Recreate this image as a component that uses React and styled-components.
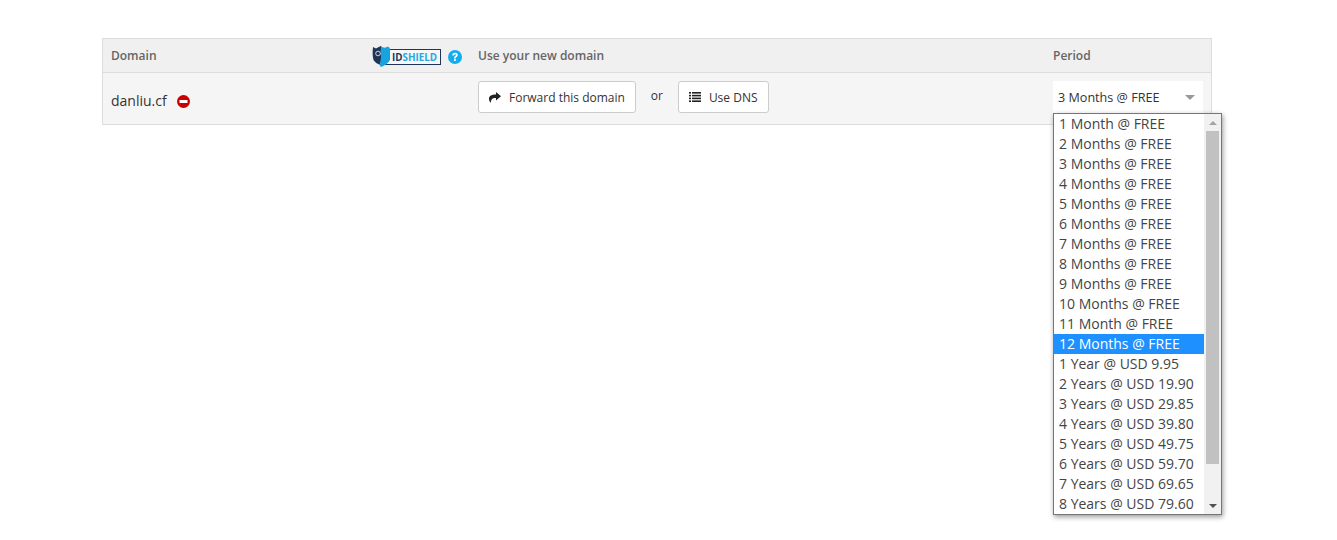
import React from 'react';
import styled, { createGlobalStyle } from 'styled-components';

const GlobalStyle = createGlobalStyle`
  html, body {
    margin: 0;
    padding: 0;
    background: #fff;
    font-family: "Open Sans", sans-serif;
  }
`;

const periods = [
  '1 Month @ FREE', '2 Months @ FREE', '3 Months @ FREE', '4 Months @ FREE', '5 Months @ FREE',
  '6 Months @ FREE', '7 Months @ FREE', '8 Months @ FREE', '9 Months @ FREE', '10 Months @ FREE',
  '11 Month @ FREE', '12 Months @ FREE', '1 Year @ USD 9.95', '2 Years @ USD 19.90', '3 Years @ USD 29.85',
  '4 Years @ USD 39.80', '5 Years @ USD 49.75', '6 Years @ USD 59.70', '7 Years @ USD 69.65', '8 Years @ USD 79.60',
];

function ShieldLogo() {
  return (
    <LogoSvg viewBox="0 0 70 24" width="70" height="24">
      <rect x="8.500" y="5.500" width="60" height="15" fill="#f4f8fa" stroke="#1f3557" strokeWidth="1" />
      <path d="M1 3 L4 4.500 Q7 2.500 9 2 L9 21 Q4 20 1.500 16 Q0 11 1 3Z" fill="#1f3557" />
      <path d="M9 2 Q12 5 16 2.500 Q18 3.500 18 5 L18 16 Q15 21 9 23 Q8 22 7.500 20.500 Q10 13 8.500 9 Z" fill="#17a4dc" />
      <circle cx="6" cy="9.500" r="2.300" fill="none" stroke="#d8e3ea" strokeWidth="0.9" />
      <text x="20" y="17" fontFamily="Open Sans, sans-serif" fontSize="10.500" fontWeight="700" textLength="45" lengthAdjust="spacingAndGlyphs">
        <tspan fill="#1f3557">ID</tspan>
        <tspan fill="#27a9e0">SHIELD</tspan>
      </text>
    </LogoSvg>
  );
}

function HelpIcon() {
  return (
    <HelpSvg width="14" height="14" viewBox="0 0 14 14">
      <circle cx="7" cy="7" r="7" fill="#10aeef" />
      <path d="M4.200 5.300 Q4.400 2.700 7 2.700 Q9.800 2.700 9.800 5 Q9.800 6.300 8.500 7 Q7.800 7.400 7.800 8.400 L6 8.400 Q5.900 6.800 7.100 6.100 Q8 5.600 8 5 Q8 4.300 7 4.300 Q6.100 4.300 6 5.600 Z" fill="#fff" />
      <rect x="6" y="9.200" width="1.800" height="1.800" fill="#fff" />
    </HelpSvg>
  );
}

function BlockedIcon() {
  return (
    <BlockedSvg width="13" height="13" viewBox="0 0 13 13">
      <circle cx="6.500" cy="6.500" r="6.500" fill="#c90000" />
      <rect x="2.500" y="5" width="8" height="3" fill="#fff" />
    </BlockedSvg>
  );
}

function ForwardIcon() {
  return (
    <svg width="12" height="11" viewBox="0 0 12 11">
      <path d="M7 0 L12 4.200 L7 8.400 L7 6 C4 5.800 2 6.600 1.800 11 C0.400 9.500 0 8.300 0 6.800 C0 3.600 3 2.400 7 2.400 Z" fill="#222" />
    </svg>
  );
}

function ListIcon() {
  return (
    <svg width="12" height="10" viewBox="0 0 12 10">
      <g fill="#222">
        <rect x="0" y="0" width="2" height="1.600" />
        <rect x="3" y="0" width="9" height="1.600" />
        <rect x="0" y="2.800" width="2" height="1.600" />
        <rect x="3" y="2.800" width="9" height="1.600" />
        <rect x="0" y="5.600" width="2" height="1.600" />
        <rect x="3" y="5.600" width="9" height="1.600" />
        <rect x="0" y="8.400" width="2" height="1.600" />
        <rect x="3" y="8.400" width="9" height="1.600" />
      </g>
    </svg>
  );
}

export default function App() {
  return (
    <>
      <GlobalStyle />
      <Page>
        <Table>
          <HeaderRow>
            <HeaderCell>
              <span>Domain</span>
              <LogoGroup>
                <ShieldLogo />
                <HelpIcon />
              </LogoGroup>
            </HeaderCell>
            <HeaderCell>Use your new domain</HeaderCell>
            <HeaderCell>Period</HeaderCell>
          </HeaderRow>
          <BodyRow>
            <DomainCell>
              <DomainName>danliu.cf</DomainName>
              <BlockedIcon />
            </DomainCell>
            <ActionCell>
              <ActionButton>
                <ForwardIcon />
                Forward this domain
              </ActionButton>
              <OrLabel>or</OrLabel>
              <ActionButton>
                <ListIcon />
                Use DNS
              </ActionButton>
            </ActionCell>
            <PeriodCell>
              <SelectBox>
                <span>3 Months @ FREE</span>
                <Caret />
              </SelectBox>
              <Dropdown>
                <OptionList>
                  {periods.map((label, i) => (
                    <Option key={label} $selected={i === 11}>{label}</Option>
                  ))}
                </OptionList>
                <Scrollbar>
                  <ScrollButton><ArrowUp /></ScrollButton>
                  <ScrollTrack><ScrollThumb /></ScrollTrack>
                  <ScrollButton><ArrowDown /></ScrollButton>
                </Scrollbar>
              </Dropdown>
            </PeriodCell>
          </BodyRow>
        </Table>
      </Page>
    </>
  );
}

const Page = styled.div`
  padding: 38px 125px 0 102px;
  height: 502px;
  overflow: hidden;
`;

const Table = styled.div`
  width: 1110px;
  box-sizing: border-box;
  border: 1px solid #dddddd;
  background: #f5f5f5;
`;

const HeaderRow = styled.div`
  display: grid;
  grid-template-columns: 367px 575px 166px;
  height: 34px;
  box-sizing: border-box;
  background: #f0f0f0;
  border-bottom: 1px solid #dddddd;
`;

const HeaderCell = styled.div`
  display: flex;
  align-items: center;
  justify-content: space-between;
  padding: 0 8px;
  font-size: 12px;
  font-weight: 600;
  color: #666;
`;

const LogoGroup = styled.div`
  display: flex;
  align-items: center;
  gap: 6px;
`;

const LogoSvg = styled.svg`
  display: block;
`;

const HelpSvg = styled.svg`
  display: block;
  margin-top: 2px;
`;

const BodyRow = styled.div`
  display: grid;
  grid-template-columns: 367px 575px 166px;
  height: 51px;
`;

const DomainCell = styled.div`
  display: flex;
  align-items: center;
  gap: 10px;
  padding: 4px 8px 0;
`;

const DomainName = styled.span`
  font-size: 14px;
  color: #333;
`;

const BlockedSvg = styled.svg`
  display: block;
  margin-top: 1px;
`;

const ActionCell = styled.div`
  display: flex;
  align-items: flex-start;
  padding: 8px 8px 0;
`;

const ActionButton = styled.div`
  display: flex;
  align-items: center;
  gap: 8px;
  height: 32px;
  box-sizing: border-box;
  padding: 0 10px;
  background: #fff;
  border: 1px solid #cccccc;
  border-radius: 3px;
  font-size: 12px;
  color: #333;
`;

const OrLabel = styled.span`
  width: 42px;
  height: 30px;
  line-height: 30px;
  text-align: center;
  font-size: 12px;
  color: #333;
`;

const PeriodCell = styled.div`
  position: relative;
  padding: 8px 8px 0;
`;

const SelectBox = styled.div`
  display: flex;
  align-items: center;
  justify-content: space-between;
  width: 150px;
  height: 32px;
  box-sizing: border-box;
  padding: 0 8px 0 5px;
  background: #fff;
  font-size: 12.6px;
  color: #333;
`;

const Caret = styled.i`
  width: 0;
  height: 0;
  border-left: 5px solid transparent;
  border-right: 5px solid transparent;
  border-top: 5px solid #999;
`;

const Dropdown = styled.div`
  position: absolute;
  left: 8px;
  top: 40px;
  z-index: 5;
  display: flex;
  width: 169px;
  height: 402px;
  box-sizing: border-box;
  border: 1px solid #767676;
  background: #fff;
  box-shadow: 1px 2px 5px rgba(0, 0, 0, 0.4);
  overflow: hidden;
`;

const OptionList = styled.div`
  flex: 1;
  min-width: 0;
`;

const Option = styled.div`
  height: 20px;
  line-height: 20px;
  padding-left: 5px;
  font-size: 14px;
  white-space: nowrap;
  color: ${(p) => (p.$selected ? '#fff' : '#444')};
  background: ${(p) => (p.$selected ? '#1e90ff' : 'transparent')};
`;

const Scrollbar = styled.div`
  display: flex;
  flex-direction: column;
  width: 17px;
  background: #f1f1f1;
`;

const ScrollButton = styled.div`
  display: flex;
  align-items: center;
  justify-content: center;
  height: 17px;
`;

const ScrollTrack = styled.div`
  flex: 1;
  padding: 0 2px;
`;

const ScrollThumb = styled.div`
  height: 333px;
  background: #c1c1c1;
`;

const ArrowUp = styled.i`
  width: 0;
  height: 0;
  border-left: 4px solid transparent;
  border-right: 4px solid transparent;
  border-bottom: 4px solid #a3a3a3;
`;

const ArrowDown = styled.i`
  width: 0;
  height: 0;
  border-left: 4px solid transparent;
  border-right: 4px solid transparent;
  border-top: 4px solid #505050;
`;
